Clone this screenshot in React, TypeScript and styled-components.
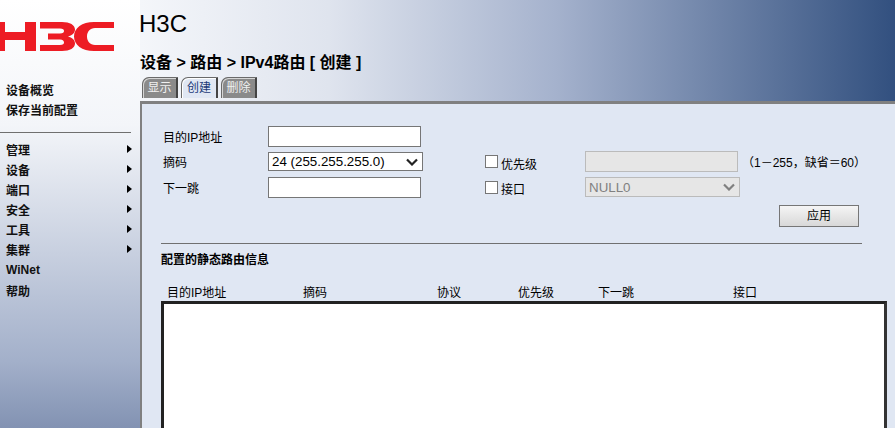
import React from 'react'
import styled, { createGlobalStyle } from 'styled-components'

const GlobalStyle = createGlobalStyle`
  html, body {
    margin: 0;
    height: 100%;
    overflow: hidden;
    background: #e0e7f3;
    font-family: "Liberation Sans", "Noto Sans CJK SC", sans-serif;
    font-size: 12px;
    color: #000;
  }
`

const Page = styled.div`
  display: grid;
  grid-template-columns: 140px 1fr;
  width: 895px;
  height: 428px;
  overflow: hidden;
`
const Sidebar = styled.div`
  background: linear-gradient(180deg, #ffffff 0%, #f3f5f9 25%, #a3b0ca 72%, #5f7299 100%);
  padding-top: 22px;
`
const Logo = styled.svg`
  display: block;
  width: 115px;
  height: 30px;
`
const QuickLinks = styled.div`
  margin: 27px 9px 6px 0;
  padding-bottom: 13px;
  border-bottom: 1px solid #6f6f6f;
`
const MenuItem = styled.div`
  display: flex;
  align-items: center;
  justify-content: space-between;
  height: 20px;
  padding: 0 8px 0 6px;
  font-weight: 700;
  color: #111;
`
const WiNetItem = styled(MenuItem)`
  margin-top: 1px;
`
const Arrow = styled.span`
  width: 0;
  height: 0;
  border-left: 5px solid #000;
  border-top: 4.5px solid transparent;
  border-bottom: 4.5px solid transparent;
`
const Main = styled.div`
  display: flex;
  flex-direction: column;
  min-width: 0;
`
const Header = styled.div`
  height: 101px;
  flex: none;
  box-sizing: border-box;
  background: linear-gradient(90deg, #f4f6fa 0%, #dfe4ee 25%, #a5b2cd 55%, #32507f 100%);
  display: flex;
  flex-direction: column;
`
const Brand = styled.div`
  font-size: 24px;
  line-height: 28px;
  margin: 10px 0 0 -1px;
`
const Crumb = styled.div`
  font-size: 16px;
  font-weight: 700;
  line-height: 22px;
  margin-top: 14px;
`
const Tabs = styled.div`
  display: flex;
  gap: 3px;
  margin: 3px 0 0 2px;
`
const Tab = styled.div<{ $active?: boolean }>`
  width: ${p => (p.$active ? 37 : 36)}px;
  height: 21px;
  box-sizing: border-box;
  text-align: center;
  line-height: 21px;
  border: 1px solid #6a6a6a;
  border-right: 2px solid #444;
  border-bottom: 0;
  border-top-left-radius: 7px;
  box-shadow: inset 1px 1px 0 ${p => (p.$active ? '#ffffff' : '#d5d5d5')};
  background: ${p => (p.$active ? '#e0e7f3' : '#8a8a8a')};
  color: ${p => (p.$active ? '#1d3a78' : '#f0f0f0')};
`
const Panel = styled.div`
  flex: 1;
  border-left: 2px solid #808080;
  border-top: 3px solid #808080;
  background: #e0e7f3;
  padding: 22px 9px 0 19px;
  min-height: 0;
`
const FormArea = styled.div`
  display: flex;
  height: 117px;
  padding-left: 2px;
`
const Fields = styled.div`
  width: 322px;
  flex: none;
`
const FieldRow = styled.div<{ $h: number }>`
  display: flex;
  align-items: center;
  height: ${p => p.$h}px;
  margin-bottom: 5px;
`
const Label = styled.div`
  width: 105px;
`
const TextBox = styled.div`
  width: 153px;
  height: 21px;
  box-sizing: border-box;
  background: #fff;
  border: 1px solid #767676;
`
const SelectBox = styled.div<{ $disabled?: boolean }>`
  display: flex;
  align-items: center;
  justify-content: space-between;
  box-sizing: border-box;
  height: ${p => (p.$disabled ? 20 : 19)}px;
  width: 155px;
  padding: 0 4px 0 3px;
  font-size: 13.333px;
  background: ${p => (p.$disabled ? '#e6e6e6' : '#fff')};
  border: 1px solid ${p => (p.$disabled ? '#bbbbbb' : '#767676')};
  color: ${p => (p.$disabled ? '#808080' : '#000')};
`
const Options = styled.div`
  flex: 1;
  padding-top: 25px;
`
const OptionRow = styled.div<{ $gap?: number }>`
  display: flex;
  align-items: center;
  margin-top: ${p => p.$gap ?? 0}px;
`
const CheckLabel = styled.label`
  display: flex;
  align-items: center;
  width: 100px;
`
const Check = styled.span`
  width: 13px;
  height: 13px;
  box-sizing: border-box;
  border: 1px solid #767676;
  background: #fff;
  margin-right: 3px;
`
const CheckText = styled.span`
  margin-top: 3px;
`
const DisabledBox = styled.div`
  width: 153px;
  height: 21px;
  box-sizing: border-box;
  background: #e6e6e6;
  border: 1px solid #bbbbbb;
`
const Hint = styled.div`
  margin-left: 4px;
  white-space: nowrap;
`
const ActionRow = styled.div`
  display: flex;
  justify-content: flex-end;
  margin: 8px 27px 0 0;
`
const Button = styled.div`
  width: 80px;
  height: 22px;
  box-sizing: border-box;
  text-align: center;
  line-height: 20px;
  border: 1px solid #767676;
  background: linear-gradient(180deg, #f5f5f5, #d8d8d8);
`
const Divider = styled.div`
  height: 1px;
  width: 701px;
  background: #707070;
`
const SectionTitle = styled.div`
  font-weight: 700;
  line-height: 18px;
  margin-top: 7px;
`
const TableHead = styled.div`
  display: grid;
  grid-template-columns: 136px 134px 81px 80px 135px 1fr;
  padding-left: 6px;
  margin-top: 16px;
  height: 16px;
  line-height: 17px;
`
const TableBox = styled.div`
  height: 200px;
  background: #fff;
  border: 3px solid #222;
  border-right-color: #333;
  border-bottom: 0;
  width: 726px;
  box-sizing: border-box;
`

const menu = ['管理', '设备', '端口', '安全', '工具', '集群']
const columns = ['目的IP地址', '摘码', '协议', '优先级', '下一跳', '接口']

const ChevronIcon = ({ color }: { color: string }) => (
  <svg width="12" height="8" viewBox="0 0 12 8">
    <path d="M1 1.500l5 5 5-5" fill="none" stroke={color} strokeWidth="2.200" />
  </svg>
)

const App = () => {
  return (
    <>
      <GlobalStyle />
      <Page>
        <Sidebar>
          <Logo viewBox="0 0 115 30">
            <g fill="#ed1c24">
              <path d="M0 0h5v10h20V0h11v29H25V18H5v11H0z" />
              <path d="M40 0h22c8 0 13 3 13 7.500 0 3.500-3 6-7 7 4 1 7 3.500 7 7 0 4.500-5 7.500-13 7.500H40v-6h20c3 0 4-1 4-2.500s-1-3-4-3H48v-6h12c3 0 4-1 4-2.500s-1-2.500-4-2.500H40z" />
              <path d="M114 0v6H95c-5 0-8 4-8 8.500s3 8.500 8 8.500h19v6H94c-12 0-20-6-20-14.500S82 0 94 0z" />
            </g>
          </Logo>
          <QuickLinks>
            <MenuItem>设备概览</MenuItem>
            <MenuItem>保存当前配置</MenuItem>
          </QuickLinks>
          {menu.map(m => (
            <MenuItem key={m}>
              {m}
              <Arrow />
            </MenuItem>
          ))}
          <WiNetItem>WiNet</WiNetItem>
          <MenuItem>帮助</MenuItem>
        </Sidebar>
        <Main>
          <Header>
            <Brand>H3C</Brand>
            <Crumb>设备 &gt; 路由 &gt; IPv4路由 [ 创建 ]</Crumb>
            <Tabs>
              <Tab>显示</Tab>
              <Tab $active>创建</Tab>
              <Tab>删除</Tab>
            </Tabs>
          </Header>
          <Panel>
            <FormArea>
              <Fields>
                <FieldRow $h={21}>
                  <Label>目的IP地址</Label>
                  <TextBox />
                </FieldRow>
                <FieldRow $h={19}>
                  <Label>摘码</Label>
                  <SelectBox>
                    24 (255.255.255.0)
                    <ChevronIcon color="#222" />
                  </SelectBox>
                </FieldRow>
                <FieldRow $h={22}>
                  <Label>下一跳</Label>
                  <TextBox />
                </FieldRow>
              </Fields>
              <Options>
                <OptionRow>
                  <CheckLabel>
                    <Check />
                    <CheckText>优先级</CheckText>
                  </CheckLabel>
                  <DisabledBox />
                  <Hint>（1－255，缺省＝60）</Hint>
                </OptionRow>
                <OptionRow $gap={5}>
                  <CheckLabel>
                    <Check />
                    <CheckText>接口</CheckText>
                  </CheckLabel>
                  <SelectBox $disabled>
                    NULL0
                    <ChevronIcon color="#808080" />
                  </SelectBox>
                </OptionRow>
                <ActionRow>
                  <Button>应用</Button>
                </ActionRow>
              </Options>
            </FormArea>
            <Divider />
            <SectionTitle>配置的静态路由信息</SectionTitle>
            <TableHead>
              {columns.map(c => (
                <div key={c}>{c}</div>
              ))}
            </TableHead>
            <TableBox />
          </Panel>
        </Main>
      </Page>
    </>
  )
}

export default App
